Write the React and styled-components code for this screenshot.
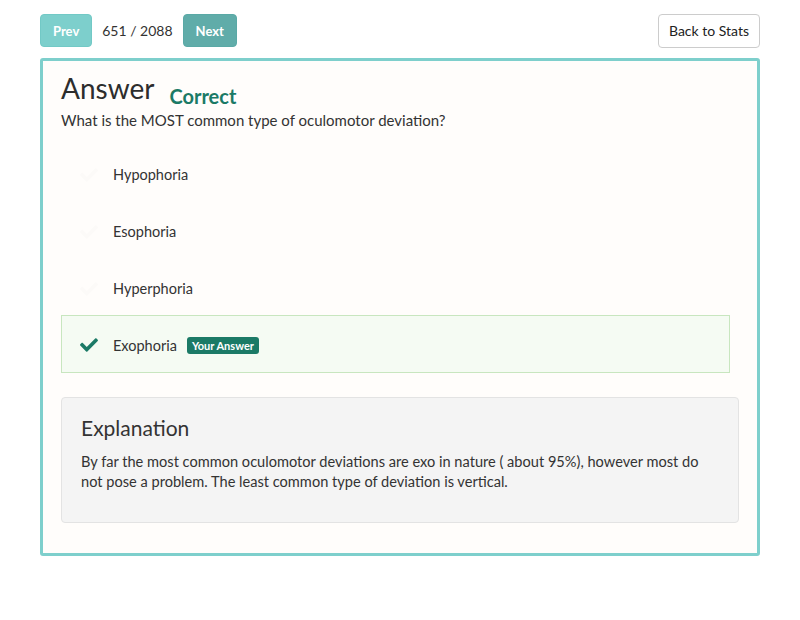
import styled, { createGlobalStyle } from 'styled-components';
import { FaCheck } from 'react-icons/fa';

const GlobalStyle = createGlobalStyle`
  body {
    margin: 0;
    background: #fff;
    font-family: Lato, "Open Sans", sans-serif;
    color: #333;
  }
`;

const Page = styled.div`
  padding: 14px 40px;
`;

const Toolbar = styled.div`
  display: flex;
  align-items: center;
  height: 33px;
  margin-bottom: 11px;
`;

const NavButton = styled.button`
  height: 33px;
  padding: 0 12px;
  border: 1px solid ${(p) => (p.$dark ? '#5aa9a6' : '#72c9c6')};
  border-radius: 4px;
  background: ${(p) => (p.$dark ? '#60aca9' : '#7dcfcc')};
  color: #fff;
  font-family: inherit;
  font-size: 13px;
  font-weight: 700;
`;

const Counter = styled.span`
  margin: 0 10px;
  font-size: 14px;
  color: #333;
`;

const BackButton = styled.button`
  margin-left: auto;
  height: 34px;
  padding: 0 10px;
  border: 1px solid #ccc;
  border-radius: 4px;
  background: #fff;
  color: #222;
  font-family: inherit;
  font-size: 14px;
`;

const Card = styled.div`
  border: 3px solid #7ecfcc;
  border-radius: 3px;
  background: #fffdfb;
  padding: 7px 18px 30px;
`;

const TitleRow = styled.div`
  display: flex;
  align-items: baseline;
  gap: 15px;
`;

const Title = styled.h2`
  margin: 0;
  font-size: 28px;
  font-weight: 400;
  color: #2d2d2d;
  line-height: 40px;
`;

const Verdict = styled.span`
  font-size: 20px;
  font-weight: 700;
  color: #1b7a66;
  position: relative;
  top: 5px;
`;

const Question = styled.p`
  margin: 2px 0 14px;
  font-size: 15px;
  line-height: 20px;
  color: #333;
`;

const Options = styled.div`
  display: flex;
  flex-direction: column;
  margin-right: 9px;
  margin-bottom: 24px;
`;

const Option = styled.div`
  display: flex;
  align-items: center;
  height: ${(p) => (p.$selected ? '58px' : '57px')};
  box-sizing: border-box;
  padding-left: 16px;
  padding-top: ${(p) => (p.$selected ? '2px' : '4px')};
  font-size: 14.5px;
  color: #333;
  border: 1px solid ${(p) => (p.$selected ? '#c8e6bf' : 'transparent')};
  background: ${(p) => (p.$selected ? '#f5fbf3' : 'transparent')};
`;

const CheckIcon = styled(FaCheck)`
  width: 22px;
  height: 18px;
  margin-right: 13px;
  color: ${(p) => (p.$on ? '#1b7a66' : '#fcfaf8')};
`;

const Badge = styled.span`
  margin-left: 10px;
  padding: 2px 5px;
  border-radius: 3px;
  background: #1b7a66;
  color: #fff;
  font-size: 11px;
  font-weight: 700;
`;

const Explanation = styled.div`
  background: #f4f4f4;
  border: 1px solid #e3e3e3;
  border-radius: 4px;
  padding: 17px 19px 30px;
`;

const ExplanationTitle = styled.h3`
  margin: 0 0 12px;
  font-size: 21px;
  font-weight: 400;
  color: #333;
`;

const ExplanationText = styled.p`
  margin: 0;
  font-size: 14.6px;
  line-height: 20px;
  color: #333;
`;

const options = ['Hypophoria', 'Esophoria', 'Hyperphoria', 'Exophoria'];
const answer = 'Exophoria';

export default function App() {
  return (
    <Page>
      <GlobalStyle />
      <Toolbar>
        <NavButton>Prev</NavButton>
        <Counter>651 / 2088</Counter>
        <NavButton $dark>Next</NavButton>
        <BackButton>Back to Stats</BackButton>
      </Toolbar>
      <Card>
        <TitleRow>
          <Title>Answer</Title>
          <Verdict>Correct</Verdict>
        </TitleRow>
        <Question>What is the MOST common type of oculomotor deviation?</Question>
        <Options>
          {options.map((o) => (
            <Option key={o} $selected={o === answer}>
              <CheckIcon $on={o === answer} />
              {o}
              {o === answer && <Badge>Your Answer</Badge>}
            </Option>
          ))}
        </Options>
        <Explanation>
          <ExplanationTitle>Explanation</ExplanationTitle>
          <ExplanationText>
            By far the most common oculomotor deviations are exo in nature ( about 95%), however most do not pose a
            problem. The least common type of deviation is vertical.
          </ExplanationText>
        </Explanation>
      </Card>
    </Page>
  );
}
